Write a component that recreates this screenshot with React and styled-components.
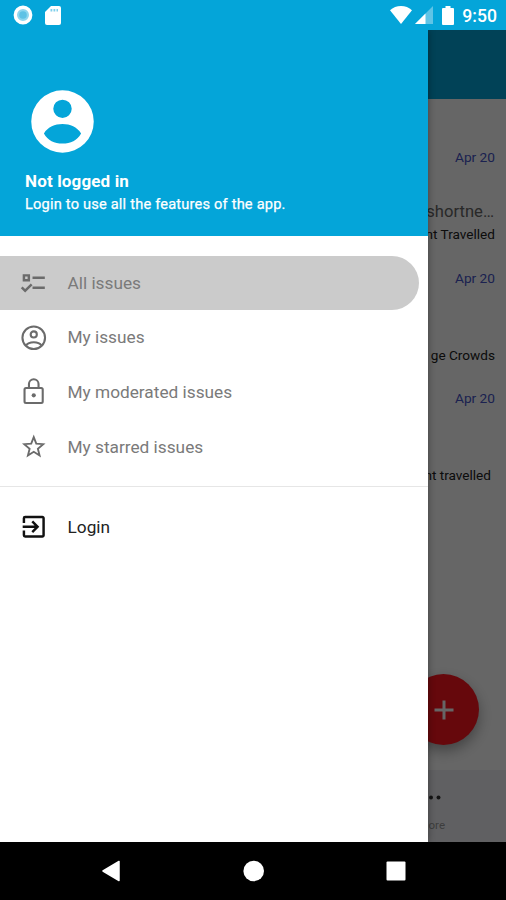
import React, { useState } from 'react';
import styled, { createGlobalStyle } from 'styled-components';
import { MdExitToApp } from 'react-icons/md';

const GlobalStyle = createGlobalStyle`
  * {
    box-sizing: border-box;
  }
  body {
    margin: 0;
    background: #000;
    font-family: Roboto, 'Liberation Sans', sans-serif;
  }
`;

// --- Layout ---
const Screen = styled.div`
  display: flex;
  flex-direction: column;
  width: 506px;
  height: 900px;
  overflow: hidden;
`;

const StatusBar = styled.header`
  display: flex;
  align-items: center;
  justify-content: space-between;
  height: 30px;
  padding: 0 9px 0 13px;
  background: #04a5d9;
  color: #fff;
`;

const StatusGroup = styled.div`
  display: flex;
  align-items: center;
  gap: ${({ $gap }) => $gap}px;
  margin-left: ${({ $left }) => $left || 0}px;
`;

const Clock = styled.span`
  margin-left: 4px;
  padding-top: 2px;
  font-size: 17.6px;
  font-weight: 500;
  line-height: 20px;
`;

const Stage = styled.div`
  position: relative;
  height: 812px;
  overflow: hidden;
`;

// --- Page under the drawer ---
const Page = styled.main`
  display: flex;
  flex-direction: column;
  height: 100%;
  background: #fff;
`;

const AppBar = styled.div`
  height: 69px;
  background: #04a5d9;
`;

const IssueList = styled.div`
  flex: 1;
  padding-top: 47px;
`;

const Issue = styled.div`
  display: flex;
  flex-direction: column;
  align-items: flex-end;
  height: 120.5px;
  padding-right: 11px;
`;

const IssueDate = styled.span`
  color: #4553c8;
  font-size: 13.7px;
  line-height: 22px;
`;

const IssueTitle = styled.span`
  height: 22px;
  margin: 32px 1px 0 0;
  color: #666;
  font-size: 16.6px;
  line-height: 23px;
`;

const IssueTag = styled.span`
  margin-right: ${({ $shift }) => $shift || 0}px;
  color: #222;
  font-size: 13.6px;
  line-height: 24px;
`;

const BottomNav = styled.nav`
  display: flex;
  justify-content: flex-end;
  height: 72px;
  padding-right: 61px;
  background: #f1f1f4;
`;

const NavTab = styled.div`
  display: flex;
  flex-direction: column;
  align-items: flex-end;
  padding-top: 25px;
  color: #999;
  font-size: 11.5px;
  line-height: 14px;
  gap: 18px;

  svg {
    margin-right: 4px;
  }
`;

const AddButton = styled.button`
  position: absolute;
  right: 27px;
  bottom: 97px;
  display: flex;
  align-items: center;
  justify-content: center;
  width: 71px;
  height: 71px;
  padding: 0;
  border: 0;
  border-radius: 50%;
  background: #ff1520;
  box-shadow: 0 6px 14px rgba(0, 0, 0, 0.35);
`;

const Scrim = styled.div`
  position: absolute;
  inset: 0;
  background: rgba(0, 0, 0, 0.6);
`;

// --- Drawer ---
const Drawer = styled.aside`
  position: absolute;
  top: 0;
  bottom: 0;
  left: 0;
  width: 428px;
  background: #fff;
  box-shadow: 0 0 7px rgba(0, 0, 0, 0.4);
`;

const DrawerHeader = styled.div`
  display: flex;
  flex-direction: column;
  height: 206px;
  padding: 54px 25px 0;
  background: #04a5d9;
  color: #fff;
`;

const UserName = styled.div`
  margin-top: 11px;
  font-size: 17px;
  font-weight: 700;
  line-height: 22px;
  letter-spacing: 0.15px;
`;

const UserHint = styled.div`
  font-size: 14.6px;
  line-height: 24px;
  letter-spacing: 0.2px;
  -webkit-text-stroke: 0.25px #fff;
`;

const Menu = styled.div`
  padding: ${({ $top }) => $top}px 9px 12px 0;
  border-bottom: ${({ $divided }) => ($divided ? '1.5px solid #e6e6e6' : '0')};
`;

const MenuItem = styled.button`
  display: flex;
  align-items: center;
  gap: 19px;
  width: 100%;
  height: 54.6px;
  padding: 0 0 0 19px;
  border: 0;
  border-radius: 0 28px 28px 0;
  background: ${({ $active }) => ($active ? '#cbcbcb' : 'transparent')};
  color: ${({ $strong }) => ($strong ? '#222' : '#7a7a7a')};
  font-family: inherit;
  font-size: 17.25px;
  text-align: left;

  svg {
    width: 29.5px;
    height: 29.5px;
    color: ${({ $strong }) => ($strong ? '#111' : '#6b6b6b')};
  }
`;

// --- System navigation ---
const SystemNav = styled.footer`
  display: flex;
  justify-content: space-between;
  align-items: center;
  height: 58px;
  padding: 0 100px 0 101px;
  background: #000;
`;

// --- Icons ---
const Avatar = () => (
  <svg width="75" height="75" viewBox="0 0 24 24">
    <path
      fill="#fff"
      fillRule="evenodd"
      d="M12 2a10 10 0 1 0 0 20a10 10 0 1 0 0-20zM12 5a2.950 2.950 0 1 1 0 5.900a2.950 2.950 0 1 1 0-5.900zM6.050 15.800C7.400 13.700 9.500 12.800 12 12.800s4.600.9 5.950 3C16.700 18 14.600 19.050 12 19.050S7.300 18 6.050 15.800z"
    />
  </svg>
);

const ListChecksIcon = () => (
  <svg viewBox="0 0 24 24" fill="currentColor">
    <path d="M3 5h6v6H3V5m2 2v2h2V7H5m6 0h10v2H11V7m0 8h10v2H11v-2m-6 5l-3.500-3.500 1.410-1.410L5 17.170l4.590-4.580L11 14l-6 6z" />
  </svg>
);

const UserIcon = () => (
  <svg viewBox="0 0 24 24" fill="none" stroke="currentColor" strokeWidth="1.700">
    <circle cx="12" cy="12" r="9.200" />
    <circle cx="12" cy="9.300" r="2.500" />
    <path d="M5.800 18.300C7 16.400 9.300 15.700 12 15.700s5 .7 6.200 2.600" />
  </svg>
);

const LockIcon = () => (
  <svg viewBox="0 0 24 24" fill="none" stroke="currentColor" strokeWidth="1.700">
    <rect x="4.500" y="9" width="14.800" height="12.200" rx="1.200" />
    <path d="M8.100 9V5.700a3.900 3.900 0 0 1 7.800 0V9" />
    <circle cx="12" cy="14.900" r="1.700" fill="currentColor" stroke="none" />
  </svg>
);

const StarIcon = () => (
  <svg viewBox="0 0 24 24" fill="none" stroke="currentColor" strokeWidth="1.500">
    <polygon points="12,4.200 14.050,9.500 19.700,9.900 15.350,13.600 16.750,19.100 12,16.100 7.250,19.100 8.650,13.600 4.300,9.900 9.950,9.500" />
  </svg>
);

const SyncIcon = () => (
  <svg width="20" height="20" viewBox="0 0 20 20">
    <circle cx="10" cy="10" r="7.700" fill="#8fd6ee" stroke="#fff" strokeWidth="3.400" />
    <circle cx="10" cy="10" r="3.800" fill="#5fc2e5" />
  </svg>
);

const SdCardIcon = () => (
  <svg width="16" height="19" viewBox="0 0 16 19">
    <path d="M6 0h8a2 2 0 0 1 2 2v15a2 2 0 0 1-2 2H2a2 2 0 0 1-2-2V6z" fill="#fff" />
    <path d="M5.500 3h1.800v2.500H5.500zM8.500 3h1.800v2.500H8.500zM11.500 3h1.500v2.500h-1.500z" fill="#7fd0ec" />
  </svg>
);

const WifiIcon = () => (
  <svg width="22" height="18" viewBox="0 0 22 18">
    <path d="M11 18L0 4.200C3 1.600 6.800 0 11 0s8 1.600 11 4.200z" fill="#fff" />
  </svg>
);

const SignalIcon = () => (
  <svg width="18" height="18" viewBox="0 0 18 18">
    <path d="M18 0v18H0z" fill="#5fc4e6" />
    <path d="M10.500 7.500V18H0z" fill="#fff" />
  </svg>
);

const BatteryIcon = () => (
  <svg width="12" height="19" viewBox="0 0 12 19">
    <path d="M3.500 0h5v2H11a1 1 0 0 1 1 1v15a1 1 0 0 1-1 1H1a1 1 0 0 1-1-1V3a1 1 0 0 1 1-1h2.500z" fill="#fff" />
  </svg>
);

const PlusIcon = () => (
  <svg width="20" height="20" viewBox="0 0 20 20">
    <path d="M10 0.500v19M0.500 10h19" stroke="#fff" strokeWidth="3" />
  </svg>
);

const MoreIcon = () => (
  <svg width="20" height="5" viewBox="0 0 20 5" fill="#333">
    <circle cx="2.500" cy="2.500" r="2" />
    <circle cx="10" cy="2.500" r="2" />
    <circle cx="17.500" cy="2.500" r="2" />
  </svg>
);

const menuItems = [
  { id: 'all', label: 'All issues', icon: ListChecksIcon },
  { id: 'mine', label: 'My issues', icon: UserIcon },
  { id: 'moderated', label: 'My moderated issues', icon: LockIcon },
  { id: 'starred', label: 'My starred issues', icon: StarIcon },
];

const issues = [
  { date: 'Apr 20', title: 'shortne…', tag: 'nt Travelled' },
  { date: 'Apr 20', title: '', tag: 'ge Crowds' },
  { date: 'Apr 20', title: '', tag: 'nt travelled', shift: 4 },
];

const App = () => {
  const [active, setActive] = useState('all');

  return (
    <Screen>
      <GlobalStyle />
      <StatusBar>
        <StatusGroup $gap={12}>
          <SyncIcon />
          <SdCardIcon />
        </StatusGroup>
        <StatusGroup $gap={3}>
          <WifiIcon />
          <SignalIcon />
          <StatusGroup $gap={4} $left={6}>
            <BatteryIcon />
            <Clock>9:50</Clock>
          </StatusGroup>
        </StatusGroup>
      </StatusBar>

      <Stage>
        <Page>
          <AppBar />
          <IssueList>
            {issues.map((issue, index) => (
              <Issue key={index}>
                <IssueDate>{issue.date}</IssueDate>
                <IssueTitle>{issue.title}</IssueTitle>
                <IssueTag $shift={issue.shift}>{issue.tag}</IssueTag>
              </Issue>
            ))}
          </IssueList>
          <BottomNav>
            <NavTab>
              <MoreIcon />
              <span>More</span>
            </NavTab>
          </BottomNav>
          <AddButton aria-label="Add">
            <PlusIcon />
          </AddButton>
        </Page>
        <Scrim />
        <Drawer>
          <DrawerHeader>
            <Avatar />
            <UserName>Not logged in</UserName>
            <UserHint>Login to use all the features of the app.</UserHint>
          </DrawerHeader>
          <Menu $top={19.5} $divided>
            {menuItems.map(({ id, label, icon: Icon }) => (
              <MenuItem key={id} $active={active === id} onClick={() => setActive(id)}>
                <Icon />
                {label}
              </MenuItem>
            ))}
          </Menu>
          <Menu $top={13}>
            <MenuItem $strong>
              <MdExitToApp />
              Login
            </MenuItem>
          </Menu>
        </Drawer>
      </Stage>

      <SystemNav>
        <svg width="20" height="22" viewBox="0 0 20 22">
          <path d="M18 1.500v19L2 11z" fill="#fff" stroke="#fff" strokeWidth="1.500" strokeLinejoin="round" />
        </svg>
        <svg width="22" height="22" viewBox="0 0 22 22">
          <circle cx="10.700" cy="11" r="10.300" fill="#fff" />
        </svg>
        <svg width="20" height="20" viewBox="0 0 20 20">
          <rect x="0.500" y="0.500" width="19" height="19" rx="1" fill="#fff" />
        </svg>
      </SystemNav>
    </Screen>
  );
};

export default App;
